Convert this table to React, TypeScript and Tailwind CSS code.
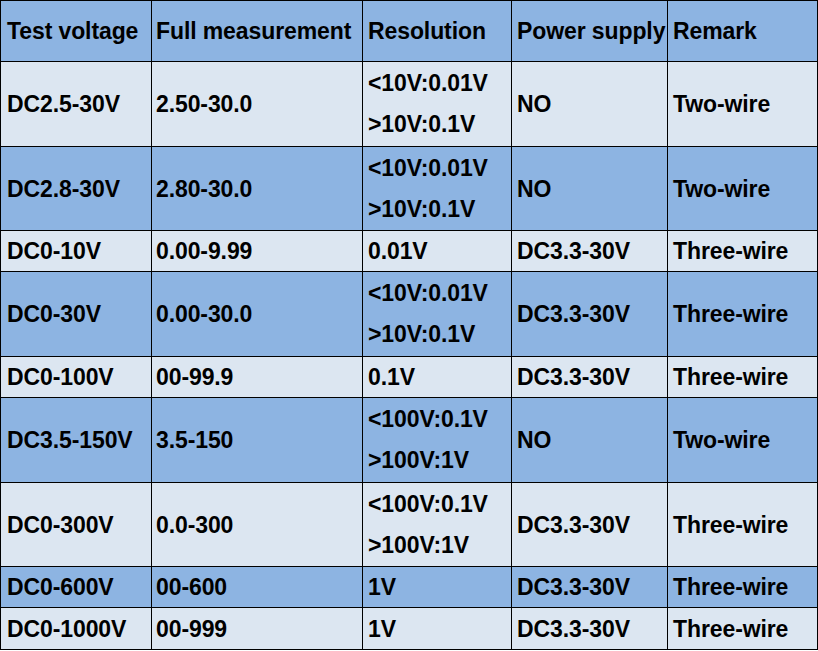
const BLUE = 'bg-[#8db4e2]';
const LIGHT = 'bg-[#dce6f1]';

type Row = {
    voltage: string;
    full: string;
    res: string[];
    power: string;
    remark: string;
    h: string;
    blue: boolean;
};

const rows: Row[] = [
    { voltage: 'DC2.5-30V', full: '2.50-30.0', res: ['<10V:0.01V', '>10V:0.1V'], power: 'NO', remark: 'Two-wire', h: 'h-[85px]', blue: false },
    { voltage: 'DC2.8-30V', full: '2.80-30.0', res: ['<10V:0.01V', '>10V:0.1V'], power: 'NO', remark: 'Two-wire', h: 'h-[84px]', blue: true },
    { voltage: 'DC0-10V', full: '0.00-9.99', res: ['0.01V'], power: 'DC3.3-30V', remark: 'Three-wire', h: 'h-[41px]', blue: false },
    { voltage: 'DC0-30V', full: '0.00-30.0', res: ['<10V:0.01V', '>10V:0.1V'], power: 'DC3.3-30V', remark: 'Three-wire', h: 'h-[85px]', blue: true },
    { voltage: 'DC0-100V', full: '00-99.9', res: ['0.1V'], power: 'DC3.3-30V', remark: 'Three-wire', h: 'h-[41px]', blue: false },
    { voltage: 'DC3.5-150V', full: '3.5-150', res: ['<100V:0.1V', '>100V:1V'], power: 'NO', remark: 'Two-wire', h: 'h-[85px]', blue: true },
    { voltage: 'DC0-300V', full: '0.0-300', res: ['<100V:0.1V', '>100V:1V'], power: 'DC3.3-30V', remark: 'Three-wire', h: 'h-[84px]', blue: false },
    { voltage: 'DC0-600V', full: '00-600', res: ['1V'], power: 'DC3.3-30V', remark: 'Three-wire', h: 'h-[41px]', blue: true },
    { voltage: 'DC0-1000V', full: '00-999', res: ['1V'], power: 'DC3.3-30V', remark: 'Three-wire', h: 'h-[42px]', blue: false },
];

const cell = 'border border-black px-[5px] py-0 align-middle text-left whitespace-nowrap overflow-hidden';

export default function App() {
    return (
        <div className="w-[818px] h-[651px] bg-white overflow-hidden">
            <table
                className="table-fixed border-collapse w-[817px] text-[23px] font-bold text-black leading-[36px] tracking-[-0.1px]"
                style={{ fontFamily: '"Liberation Sans", Arial, sans-serif' }}
            >
                <colgroup>
                    <col className="w-[151px]" />
                    <col className="w-[211px]" />
                    <col className="w-[149px]" />
                    <col className="w-[156px]" />
                    <col className="w-[150px]" />
                </colgroup>
                <thead>
                    <tr className={`h-[61px] ${BLUE}`}>
                        <th className={`${cell} font-bold pl-[6px]`}>Test voltage</th>
                        <th className={`${cell} font-bold pl-[4px]`}>Full measurement</th>
                        <th className={`${cell} font-bold`}>Resolution</th>
                        <th className={`${cell} font-bold pr-0`}>Power supply</th>
                        <th className={`${cell} font-bold`}>Remark</th>
                    </tr>
                </thead>
                <tbody>
                    {rows.map((r, i) => (
                        <tr key={i} className={`${r.h} ${r.blue ? BLUE : LIGHT}`}>
                            <td className={`${cell} pl-[6px]`}>{r.voltage}</td>
                            <td className={`${cell} pl-[4px]`}>{r.full}</td>
                            <td className={cell}>
                                {r.res.map((line, j) => (
                                    <div key={j} className={r.res.length > 1 ? 'leading-[41px]' : ''}>
                                        {line}
                                    </div>
                                ))}
                            </td>
                            <td className={cell}>{r.power}</td>
                            <td className={cell}>{r.remark}</td>
                        </tr>
                    ))}
                </tbody>
            </table>
        </div>
    );
}
